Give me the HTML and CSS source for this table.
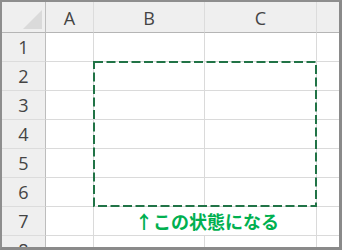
FILE: index.html
```html
<!DOCTYPE html>
<html lang="ja">
<head>
<meta charset="utf-8">
<link rel="stylesheet" href="styles.css">
</head>
<body>
<div class="sheet">
  <div class="corner"><span class="tri"></span></div>
  <div class="ch">A</div>
  <div class="ch">B</div>
  <div class="ch">C</div>
  <div class="ch last"></div>

  <div class="rh">1</div><div class="c"></div><div class="c"></div><div class="c"></div><div class="c last"></div>
  <div class="rh">2</div><div class="c"></div><div class="c"></div><div class="c"></div><div class="c last"></div>
  <div class="rh">3</div><div class="c"></div><div class="c"></div><div class="c"></div><div class="c last"></div>
  <div class="rh">4</div><div class="c"></div><div class="c"></div><div class="c"></div><div class="c last"></div>
  <div class="rh">5</div><div class="c"></div><div class="c"></div><div class="c"></div><div class="c last"></div>
  <div class="rh">6</div><div class="c"></div><div class="c"></div><div class="c"></div><div class="c last"></div>
  <div class="rh">7</div><div class="c"></div><div class="c note">↑この状態になる</div><div class="c last"></div>
  <div class="rh">8</div><div class="c"></div><div class="c"></div><div class="c"></div><div class="c last"></div>

  <div class="marquee">
    <svg width="224" height="146" viewBox="0 0 224 146">
      <rect x="1" y="1" width="222" height="144" fill="none" stroke="#217346" stroke-width="2" stroke-dasharray="9 3.5"/>
    </svg>
  </div>
</div>
</body>
</html>
```
FILE: styles.css
```css
html, body {
  margin: 0;
  padding: 0;
  background: #ffffff;
}
.sheet {
  position: relative;
  box-sizing: border-box;
  width: 342px;
  height: 250px;
  overflow: hidden;
  border-left: 2px solid #8e8e8e;
  border-top: 2px solid #8e8e8e;
  border-right: 3px solid #8a8a8a;
  border-bottom: 3px solid #8a8a8a;
  display: grid;
  grid-template-columns: 44px 48px 111px 112px 1fr;
  grid-template-rows: 31px repeat(8, 29px);
  font-family: "Open Sans", "Noto Sans", sans-serif;
  font-size: 18px;
  color: #444444;
}
.sheet > div {
  box-sizing: border-box;
}
.corner {
  background: #efefef;
  border-right: 1px solid #bdbdbd;
  border-bottom: 1px solid #b5b5b5;
  position: relative;
}
.tri {
  position: absolute;
  right: 3px;
  bottom: 3px;
  width: 0;
  height: 0;
  border-left: 19px solid transparent;
  border-bottom: 19px solid #dadada;
}
.ch {
  background: #efefef;
  border-right: 1px solid #dcdcdc;
  border-bottom: 1px solid #b5b5b5;
  display: flex;
  align-items: center;
  justify-content: center;
  padding-top: 1px;
}
.rh {
  background: #efefef;
  border-right: 1px solid #bdbdbd;
  border-bottom: 1px solid #dcdcdc;
  display: flex;
  align-items: center;
  justify-content: center;
}
.c {
  border-right: 1px solid #dadada;
  border-bottom: 1px solid #dadada;
}
.last {
  border-right: none;
}
.note {
  grid-column: span 2;
  display: flex;
  align-items: center;
  justify-content: center;
  padding-left: 4px;
  font-family: "Noto Sans CJK JP", sans-serif;
  font-weight: 700;
  font-size: 18px;
  color: #00b050;
  white-space: nowrap;
}
.marquee {
  position: absolute;
  grid-column: 3 / 5;
  grid-row: 3 / 8;
  left: -1px;
  top: -1px;
  right: 0;
  bottom: 0;
}
.marquee svg {
  display: block;
}
```
